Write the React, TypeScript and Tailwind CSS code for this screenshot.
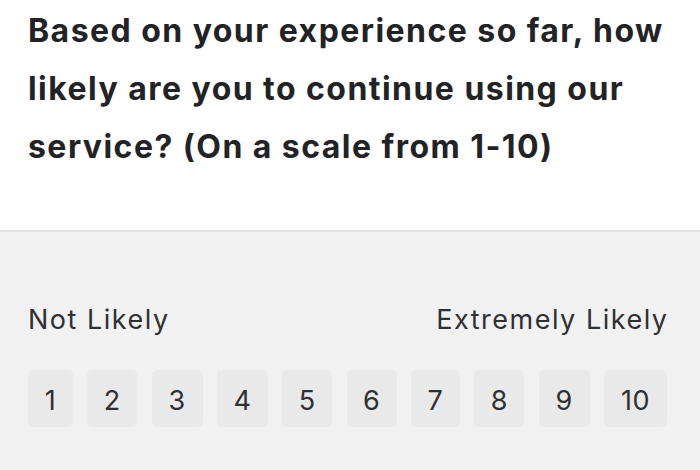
import React from "react";

const widths = [45, 50, 51, 51, 50, 50, 49, 50, 51, 63];

export default function App() {
  return (
    <div
      className="w-[700px] h-[470px] bg-white overflow-hidden flex flex-col"
      style={{ fontFamily: '"Inter", "Liberation Sans", sans-serif' }}
    >
      <div className="h-[230px] pl-[28px] pt-[2px]">
        <h1 className="w-[660px] text-[32px] leading-[58px] font-bold text-[#222326] tracking-[1.45px]">
          Based on your experience so far, how likely are you to continue using our service? (On a scale from 1-10)
        </h1>
      </div>
      <div className="h-[2px] bg-[#e2e2e2]" />
      <div className="flex-1 bg-[#f1f1f1] pl-[28px]">
        <div className="w-[639px] flex justify-between pt-[70px] text-[27px] leading-[36px] text-[#2f3033] tracking-[1.5px]">
          <span>Not Likely</span>
          <span className="-mr-[1.5px]">Extremely Likely</span>
        </div>
        <div className="flex justify-between mt-[32px] w-[639px]">
          {widths.map((w, i) => (
            <div
              key={i}
              className="h-[57px] pt-[5px] rounded-[5px] bg-[#e9e9e9] flex items-center justify-center text-[27px] text-[#2f3033] tracking-[0.5px]"
              style={{ width: w }}
            >
              {i + 1}
            </div>
          ))}
        </div>
      </div>
    </div>
  );
}
